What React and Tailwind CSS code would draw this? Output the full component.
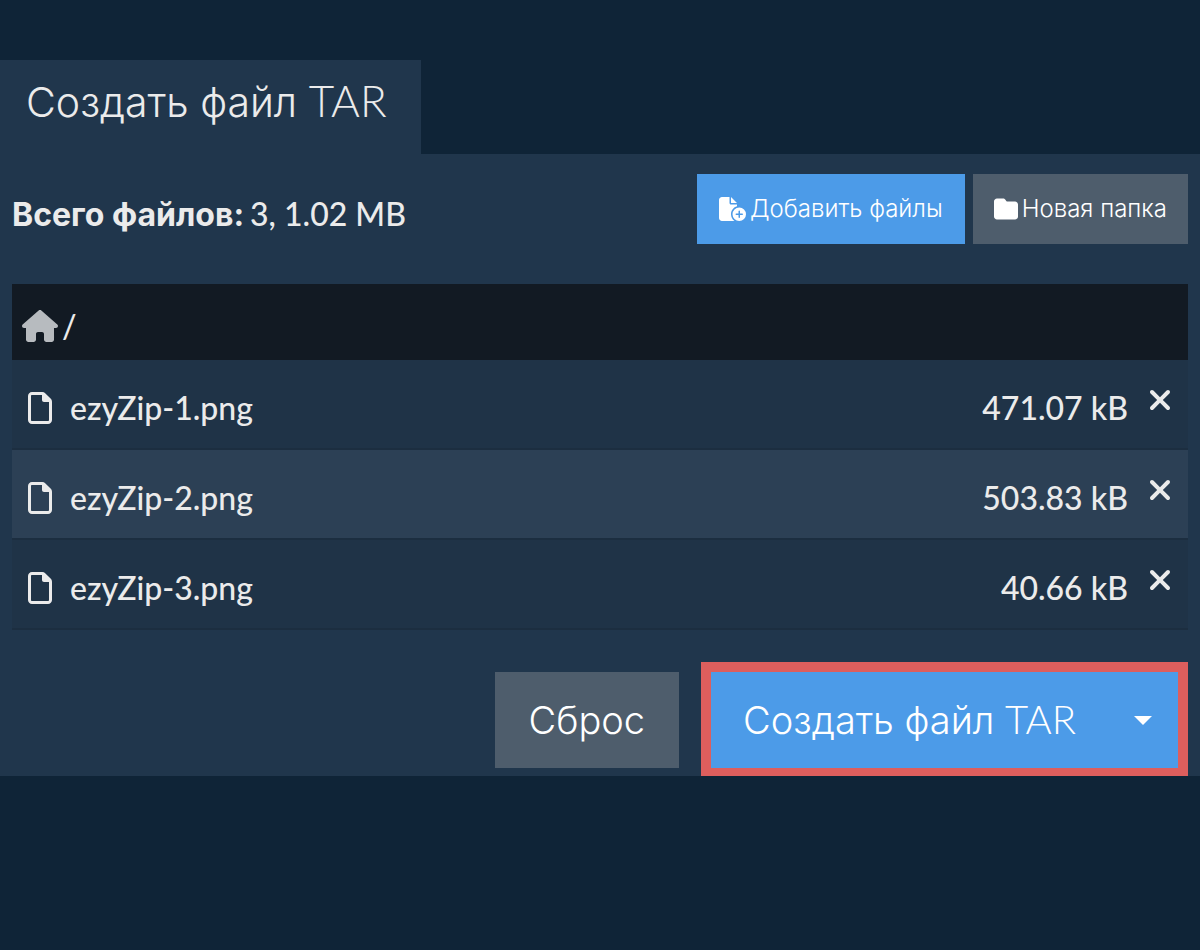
import React, { useState } from "react";
import {
  FaFileCirclePlus,
  FaFolder,
  FaHouse,
  FaRegFile,
  FaXmark,
} from "react-icons/fa6";

const initialFiles = [
  { name: "ezyZip-1.png", size: "471.07 kB" },
  { name: "ezyZip-2.png", size: "503.83 kB" },
  { name: "ezyZip-3.png", size: "40.66 kB" },
];

function FileRow({ file, onRemove }) {
  return (
    <tr className="h-[90px] bg-[#1f3347] even:bg-[#2c4055]">
      <td className="w-[58px] pt-2 pl-4">
        <FaRegFile className="h-8 w-6" />
      </td>
      <td className="pt-2">{file.name}</td>
      <td className="pt-2 text-right">{file.size}</td>
      <td className="w-[60px] pt-6 pr-4 align-top">
        <button
          onClick={onRemove}
          aria-label={`Удалить ${file.name}`}
          className="ml-auto flex cursor-pointer"
        >
          <FaXmark className="h-8 w-6" />
        </button>
      </td>
    </tr>
  );
}

export default function App() {
  const [files, setFiles] = useState(initialFiles);

  const removeFile = (name) => {
    setFiles(files.filter((file) => file.name !== name));
  };

  return (
    <div className="min-h-screen bg-[#0f2437] pt-[60px] font-['Inter',sans-serif] text-[#ebebeb]">
      <div className="flex">
        <h1 className="bg-[#20364c] pt-3 pr-[34px] pb-[22px] pl-[26px] text-[41px] leading-[60px] font-light">
          Создать файл{" "}
          <span className="font-['Lato',sans-serif] text-[44px] leading-none">TAR</span>
        </h1>
      </div>

      <main className="bg-[#20364c] px-3 pt-5">
        <div className="flex items-start justify-between">
          <p className="flex items-baseline gap-[6px] pt-5 text-[32px] leading-10">
            <strong className="font-bold">Всего файлов:</strong>
            <span className="font-['Lato',sans-serif] font-medium">3, 1.02 MB</span>
          </p>
          <div className="flex gap-2 text-2xl font-light text-white">
            <button className="flex h-[70px] cursor-pointer items-center gap-1 bg-[#4c9be8] px-[22px]">
              <FaFileCirclePlus className="h-6 w-[27px]" />
              Добавить файлы
            </button>
            <button className="flex h-[70px] cursor-pointer items-center gap-1 bg-[#4e5d6c] px-[21px]">
              <FaFolder className="h-6 w-6" />
              Новая папка
            </button>
          </div>
        </div>

        <div className="mt-10 flex h-[76px] items-center gap-1 bg-[#121a23] px-[10px] pt-2 font-['Lato',sans-serif] text-[32px] font-medium">
          <a href="#" aria-label="Корневая папка" className="text-[#b7bbbf]">
            <FaHouse className="h-8 w-9" />
          </a>
          /
        </div>

        <table className="w-full border-separate border-spacing-0 font-['Lato',sans-serif] text-[32px] leading-10 font-medium [&_td]:border-b-2 [&_td]:border-[#1c2e40]">
          <tbody>
            {files.map((file) => (
              <FileRow
                key={file.name}
                file={file}
                onRemove={() => removeFile(file.name)}
              />
            ))}
          </tbody>
        </table>

        <div className="mt-8 flex items-start justify-end gap-[22px] text-[38px] font-light text-white">
          <button
            onClick={() => setFiles([])}
            className="mt-[10px] h-24 cursor-pointer bg-[#4e5d6c] px-[34px]"
          >
            Сброс
          </button>
          <div className="flex border-[10px] border-b-8 border-[#dd5e5d] bg-[#4c9be8]">
            <button className="h-24 cursor-pointer pr-8 pl-8">
              Создать файл{" "}
              <span className="font-['Lato',sans-serif] text-[40px] leading-none">TAR</span>
            </button>
            <button
              aria-label="Другие форматы"
              className="flex h-24 cursor-pointer items-center px-[26px]"
            >
              <svg viewBox="0 0 18 9" className="h-[9px] w-[18px]" fill="currentColor">
                <path d="M0 0h18L9 9z" />
              </svg>
            </button>
          </div>
        </div>
      </main>
    </div>
  );
}
